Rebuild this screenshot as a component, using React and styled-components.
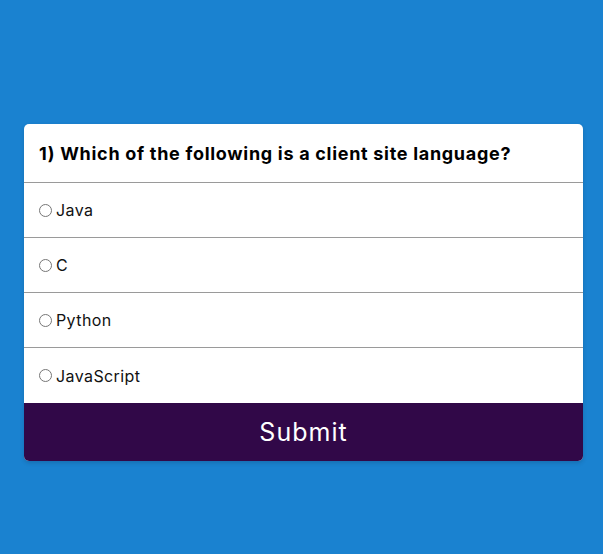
import React from "react";
import styled, { createGlobalStyle } from "styled-components";

const Global = createGlobalStyle`
  html, body { margin: 0; padding: 0; }
  body {
    background: #1a82d0;
    font-family: Inter, "Noto Sans", sans-serif;
    min-height: 554px;
  }
`;

const Page = styled.div`
  padding: 124px 20px 0 24px;
`;

const Card = styled.div`
  width: 559px;
  background: #fff;
  border-radius: 5px;
  overflow: hidden;
  box-shadow: 0 2px 4px rgba(0, 0, 0, 0.15);
`;

const Title = styled.h2`
  margin: 0;
  height: 59px;
  display: flex;
  align-items: center;
  padding: 1px 15px 0;
  font-size: 18px;
  font-weight: 700;
  letter-spacing: 0.7px;
  color: #000;
  border-bottom: 1px solid #9a9a9a;
  box-sizing: border-box;
`;

const List = styled.ul`
  list-style: none;
  margin: 0;
  padding: 0;
`;

const Option = styled.li`
  height: 55px;
  box-sizing: border-box;
  display: flex;
  align-items: center;
  padding: 0 15px;
  border-bottom: ${(p) => (p.$last ? "none" : "1px solid #9a9a9a")};
`;

const Label = styled.label`
  display: flex;
  align-items: center;
  font-size: 16px;
  letter-spacing: 0.4px;
  color: #111;
  cursor: pointer;
`;

const Radio = styled.input`
  width: 13px;
  height: 13px;
  margin: 0 4px 0 0;
`;

const Submit = styled.button`
  display: block;
  width: 100%;
  height: 58px;
  border: none;
  background: #310848;
  color: #fff;
  font-family: inherit;
  font-size: 25px;
  letter-spacing: 1px;
  cursor: pointer;
`;

const options = ["Java", "C", "Python", "JavaScript"];

export default function App() {
  return (
    <>
      <Global />
      <Page>
        <Card>
          <Title>1) Which of the following is a client site language?</Title>
          <List>
            {options.map((o, i) => (
              <Option key={o} $last={i === options.length - 1}>
                <Label>
                  <Radio type="radio" name="answer" value={o} />
                  {o}
                </Label>
              </Option>
            ))}
          </List>
          <Submit>Submit</Submit>
        </Card>
      </Page>
    </>
  );
}
